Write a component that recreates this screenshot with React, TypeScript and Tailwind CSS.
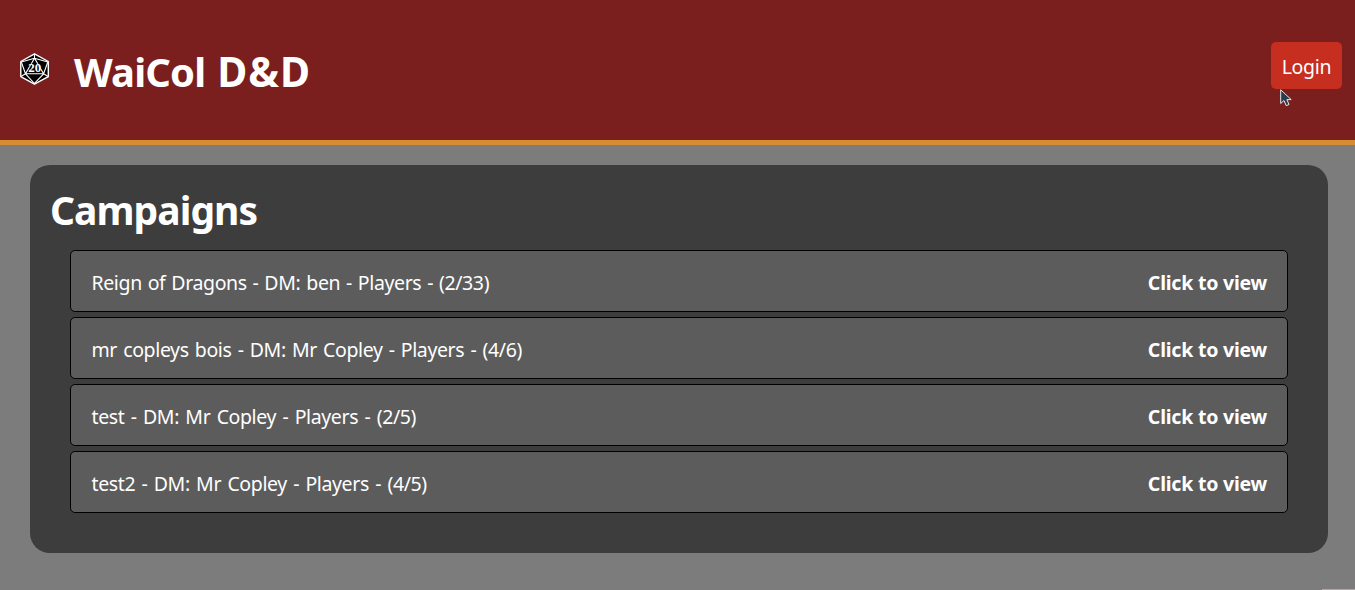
import React from "react";

type Campaign = { name: string; dm: string; players: string; spacing: string };

const campaigns: Campaign[] = [
  { name: "Reign of Dragons", dm: "ben", players: "2/33", spacing: "[word-spacing:1.2px]" },
  { name: "mr copleys bois", dm: "Mr Copley", players: "4/6", spacing: "[word-spacing:1.5px]" },
  { name: "test", dm: "Mr Copley", players: "2/5", spacing: "[word-spacing:1.65px]" },
  { name: "test2", dm: "Mr Copley", players: "4/5", spacing: "[word-spacing:1.65px]" },
];

function DiceLogo() {
  return (
    <svg className="h-8 w-[30px] shrink-0" viewBox="0 0 30 32" aria-label="d20">
      <path d="M14.5 .8 28.3 8.5V23.7L14.5 31.2 .8 23.7V8.5Z" fill="#000" stroke="#fff" strokeWidth="1.4" strokeLinejoin="round" />
      <path
        d="M14.5 1v4.2M14.5 5.2 1.3 9M14.5 5.2 27.8 9M14.5 5.2 5.5 20.8H23.6ZM1.3 9l4.2 11.8M27.8 9l-4.2 11.8M5.5 20.8 1 23.4M23.6 20.8l4.5 2.6M5.5 20.8 14.5 30.5l9.1-9.7"
        fill="none"
        stroke="#fff"
        strokeWidth="1.1"
      />
      <text x="14.8" y="19.3" textAnchor="middle" fontFamily="Liberation Serif, serif" fontWeight="bold" fontSize="13" fill="#fff" stroke="#000" strokeWidth=".5" paintOrder="stroke">
        20
      </text>
    </svg>
  );
}

function Pointer() {
  return (
    <svg className="absolute top-[47px] left-[9px] h-[18px] w-3" viewBox="0 0 12 18">
      <path d="M.7.8V14.5L4 11.5 6.2 16.7 9 15.5 6.9 10.6H11.2Z" fill="#293d4a" stroke="#e4e9ec" strokeWidth="1" />
    </svg>
  );
}

export default function App() {
  return (
    <div className="flex h-[590px] flex-col overflow-hidden bg-[#7c7c7c] font-['Noto_Sans','Open_Sans',sans-serif] text-white">
      <header className="flex h-[145px] items-start justify-between border-b-[5px] border-[#d68c32] bg-[#7a1f1e] pr-[13px] pl-5">
        <div className="flex pt-[53px]">
          <DiceLogo />
          <h1 className="-mt-0.5 ml-6 text-[40px] leading-[40px] font-bold tracking-[-0.85px] [word-spacing:2.5px] whitespace-nowrap">
            WaiCol <span className="text-[41px] tracking-[0.9px]">D&amp;D</span>
          </h1>
        </div>
        <div className="relative mt-[42px]">
          <button className="block h-[47px] w-[71px] rounded-[5px] bg-[#c62e20] pt-[3px] text-[19.5px] leading-[44px] tracking-[-0.3px]">Login</button>
          <Pointer />
        </div>
      </header>
      <main className="mt-5 mr-[27px] ml-[30px] h-[388px] rounded-[20px] bg-[#3d3d3d] px-5 pt-5">
        <h2 className="h-[65px] text-[39px] leading-[50px] font-bold tracking-[-0.95px]">Campaigns</h2>
        <ul className="flex flex-col gap-[5px] px-5">
          {campaigns.map((c) => (
            <li key={c.name} className="flex h-[62px] items-center justify-between rounded-[5px] border border-black bg-[#5c5c5c] px-5 pt-1 text-[19.5px] whitespace-nowrap">
              <span className={`tracking-[-0.38px] pl-[0.5px] ${c.spacing}`}>{`${c.name} - DM: ${c.dm} - Players - (${c.players})`}</span>
              <span className="font-bold tracking-[-0.22px]">Click to view</span>
            </li>
          ))}
        </ul>
      </main>
      <div className="mt-auto h-px w-[33px] self-end bg-[#b3a5ad]" />
    </div>
  );
}
